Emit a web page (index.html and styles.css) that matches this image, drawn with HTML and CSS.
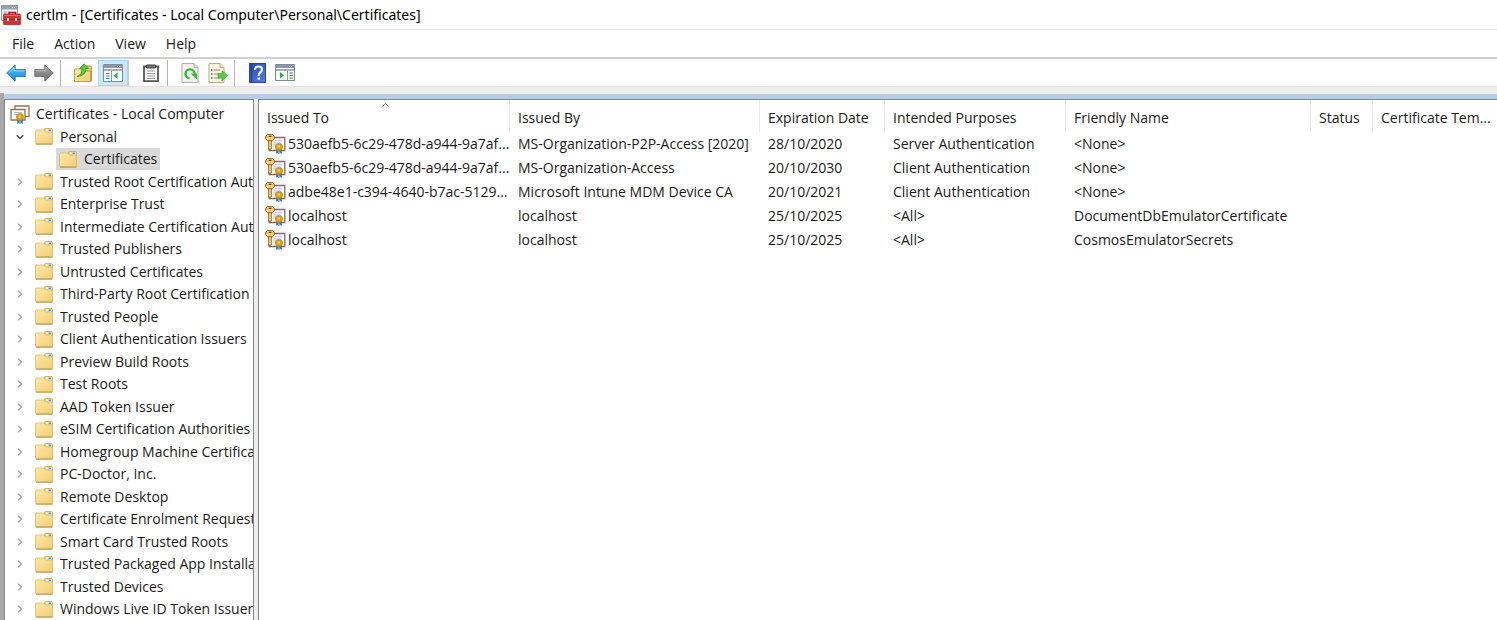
FILE: index.html
```
<!DOCTYPE html>
<html lang="en">
<head>
<meta charset="utf-8">
<title>certlm - [Certificates - Local Computer\Personal\Certificates]</title>
<link rel="stylesheet" href="styles.css">
</head>
<body>
<svg class="sprite" aria-hidden="true">
  <defs>
    <linearGradient id="g-folder" x1="0" y1="0" x2="1" y2="1"><stop offset="0" stop-color="#ffe9a6"/><stop offset="1" stop-color="#f3cd73"/></linearGradient>
    <linearGradient id="g-blue" x1="0" y1="0" x2="0" y2="1"><stop offset="0" stop-color="#5cc6ff"/><stop offset="1" stop-color="#1487dc"/></linearGradient>
    <linearGradient id="g-grey" x1="0" y1="0" x2="0" y2="1"><stop offset="0" stop-color="#a5a5a5"/><stop offset="1" stop-color="#6f6f6f"/></linearGradient>
    <linearGradient id="g-help" x1="0" y1="0" x2="1" y2="1"><stop offset="0" stop-color="#2346b4"/><stop offset="1" stop-color="#5b7fe8"/></linearGradient>
    <symbol id="i-folder" viewBox="0 0 18 17">
      <path d="M9.500 3V1.500q0-1 1-1h5.500q1.500 0 1.500 1.500V15h-8z" fill="#f2cf7e" stroke="#c9a454" stroke-width=".8"/>
      <path d="M11 1.500h5.500v1.900H11z" fill="#eef6fc"/><path d="M13.500 1.500h2.500v1.700h-2.500z" fill="#4f9fe0"/>
      <path d="M.5 3q0-1 1-1H9l1.500 2h6.500q.6 0 .6.600V15q0 1-1 1H1.500q-1 0-1-1z" fill="url(#g-folder)" stroke="#dcb969" stroke-width=".8"/>
      <path d="M1 16.100h16.500" stroke="#b08f4d"/>
    </symbol>
    <symbol id="i-ribbon" viewBox="0 0 8 11">
      <path d="M1.200 5h2.400v6l-1.200-1-1.200 1zM4.400 5h2.400v6l-1.200-1-1.200 1z" fill="#2f73dc"/>
      <circle cx="4" cy="4" r="3.600" fill="#dd9f10" stroke="#b97d08" stroke-width=".6"/><circle cx="3.800" cy="3.600" r="1.300" fill="#f8d75e"/>
    </symbol>
    <symbol id="i-root" viewBox="0 0 20 19">
      <path d="M5 1h14v10.500H5z" fill="#fffdf6" stroke="#8b7654" stroke-width="1.300"/>
      <path d="M1 4.500h14V15H1z" fill="#fff" stroke="#8b7654" stroke-width="1.300"/>
      <path d="M4 7.500h8M3.500 9.500h4" stroke="#a7b2d3" stroke-width=".8"/>
      <use href="#i-ribbon" x="6" y="8" width="8" height="11"/>
    </symbol>
    <symbol id="i-cert" viewBox="0 0 21 20">
      <path d="M4 3.500h15.800v13H4z" fill="#fff" stroke="#806d50" stroke-width="1.300"/>
      <path d="M10 6.800h7M9 9h7.500M8 11h3" stroke="#a6afd8" stroke-width=".9"/>
      <path d="M3.600 6h3v8.500L5 16l-1.400-1.300v-1.500l.8-.7-.8-.9z" fill="#f0b64b" stroke="#8f5c12" stroke-width=".7"/>
      <path d="M2.500.5h5l1.800 1.600v2.600L7.500 6.800h-5L.7 4.800V2.100z" fill="#f6c363" stroke="#8f5c12" stroke-width=".9"/>
      <path d="M3.700 2.400h2.700" stroke="#5f420f" stroke-width="1.200"/><path d="M2 4h5.500" stroke="#fff0bd" stroke-width=".8"/><path d="M5 7.300v6.500" stroke="#ffe7ae" stroke-width=".8"/>
      <use href="#i-ribbon" x="10" y="9" width="8" height="11"/>
    </symbol>
    <symbol id="i-right" viewBox="0 0 8 8"><path d="M2.200.8 5.500 4 2.200 7.200" fill="none" stroke="#a2a2a2" stroke-width="1.300"/></symbol>
    <symbol id="i-down" viewBox="0 0 8 8"><path d="M.8 2.200 4 5.500 7.200 2.200" fill="none" stroke="#404040" stroke-width="1.400"/></symbol>
  </defs>
</svg>

<div class="window">
  <header class="titlebar">
    <svg width="20" height="20" viewBox="0 0 20 20" aria-hidden="true">
      <path d="M.5.500h16v15H.5z" fill="#edf1f4" stroke="#8d99a5"/><path d="M1 1h15v3.500H1z" fill="#94a3b2"/><path d="M11 2.500h1M13 2.500h1" stroke="#fff"/>
      <path d="M2.500 7h3.500M2.500 9h2" stroke="#8b9db0"/>
      <path d="M8 9.500V7.500h6.500v2" fill="none" stroke="#8e2020" stroke-width="1.500"/>
      <path d="M2.500 10q0-1 1-1h15q1 0 1 1v9q0 .7-.7.700H3.200q-.7 0-.7-.7z" fill="#cf3434" stroke="#a32222" stroke-width=".7"/>
      <path d="M3 14.500h16.500" stroke="#98201f"/><path d="M6 13h2v3H6zM14 13h2v3h-2z" fill="#efd9d9"/><path d="M3.500 10.500h15.500" stroke="#e86a62"/>
    </svg>
    <h1 class="title">certlm - [Certificates - Local Computer\Personal\Certificates]</h1>
  </header>

  <nav class="menubar" aria-label="Menu">
    <button>File</button><button>Action</button><button>View</button><button>Help</button>
  </nav>

  <div class="toolbar" role="toolbar" aria-label="Tools">
    <button class="tool" aria-label="Back"><svg width="20" height="18" viewBox="0 0 20 18"><path d="M.7 9 9.200.9v4.600h10v7h-10v4.600z" fill="url(#g-blue)" stroke="#2777b8" stroke-width=".9"/><path d="M3 8.500 8 3.800v3h10" fill="none" stroke="#a5e2ff" stroke-width=".8"/></svg></button>
    <button class="tool" aria-label="Forward"><svg width="20" height="18" viewBox="0 0 20 18"><path d="M19.300 9 10.800.9v4.600H.8v7h10v4.600z" fill="url(#g-grey)" stroke="#707070" stroke-width=".9"/><path d="M2 6.800h10v-3" fill="none" stroke="#c8c8c8" stroke-width=".8"/></svg></button>
    <span class="rule"></span>
    <button class="tool" aria-label="Up one level"><svg width="20" height="20" viewBox="0 0 20 20"><path d="M10 3h7q1.500 0 1.500 1.500V18H10z" fill="#ecc36a" stroke="#bf9547"/><path d="M1.500 6h7l2 2h7v10.500h-16z" fill="url(#g-folder)" stroke="#c79d4b"/><path d="M4 13.500Q9 12 9 5.500H6.500L11 .8l4.800 4.700H13Q13 13 4 13.500z" fill="#4fce3a" stroke="#2e9c22" stroke-width=".8"/></svg></button>
    <button class="tool pressed" aria-label="Show or hide console tree" aria-pressed="true"><svg width="20" height="18" viewBox="0 0 20 18"><path d="M.5.500h19v17H.5z" fill="#f5f8fa" stroke="#808b98"/><path d="M1 1h18v3H1z" fill="#8c98a7"/><path d="M14 2.500h1M16 2.500h1" stroke="#fff"/><path d="M1 6h18" stroke="#a4afbb" stroke-width="2"/><path d="M8.500 7v10" stroke="#8b99a9"/><path d="M3 9.500h3.500M3 12h3.500M3 14.500h3.500" stroke="#3f78be" stroke-width="1.200"/><path d="M14.500 8.500v6.500l-4-3.200z" fill="#2fae33"/></svg></button>
    <span class="rule edge"></span>
    <button class="tool" aria-label="Properties"><svg width="16" height="18" viewBox="0 0 16 18"><path d="M1 2.500h14v14.700H1z" fill="#fafafa" stroke="#555" stroke-width="1.800"/><path d="M3.500 1h9v3h-9z" fill="#777" stroke="#444"/><path d="M4 7h8M4 9.500h8M4 12h8M4 14.500h8" stroke="#999"/></svg></button>
    <span class="rule"></span>
    <button class="tool" aria-label="Refresh"><svg width="18" height="20" viewBox="0 0 18 20"><path d="M1 .6h12l4 4v14.800H1z" fill="#f5f5f4" stroke="#a8a8a8"/><path d="M13 .6v4h4" fill="#ddd" stroke="#b0b0b0"/><path d="M8.500 15.300a4.500 4.500 0 1 1 5-4.500" fill="none" stroke="#39b83a" stroke-width="2.400"/><path d="M9.500 10.500h6.500v6z" fill="#39b83a"/></svg></button>
    <button class="tool" aria-label="Export list"><svg width="20" height="20" viewBox="0 0 20 20"><path d="M1 .6h11l4 4v14.800H1z" fill="#fcf5dc" stroke="#b1a98e"/><path d="M12 .6v4h4" fill="#eee0b8" stroke="#b1a98e"/><path d="M3 7h1.500M3 11h1.500M3 15h1.500" stroke="#555" stroke-width="1.300"/><path d="M6 7h6M6 11h5M6 15h6" stroke="#8c8490"/><path d="M10 10.700h4V7.800l5.500 5-5.500 5V15h-4z" fill="#58cb45" stroke="#35a429" stroke-width=".7"/></svg></button>
    <span class="rule"></span>
    <button class="tool" aria-label="Help"><svg width="17" height="20" viewBox="0 0 17 20"><path d="M.5.500h16v19H.5z" fill="url(#g-help)" stroke="#2945a0"/><path d="M2.500 1v18" stroke="#1d3a9a"/><path d="M6 6.700q0-3.200 3.500-3.200t3.500 3q0 1.700-1.800 2.900Q9.700 10.500 9.700 12.700" fill="none" stroke="#fff" stroke-width="2"/><path d="M8.600 14.500h2.300v2.200H8.600z" fill="#fff"/></svg></button>
    <button class="tool" aria-label="Show or hide action pane"><svg width="20" height="17" viewBox="0 0 20 17"><path d="M.5.500h19v16H.5z" fill="#f5f7f9" stroke="#808b98"/><path d="M1 1h18v3H1z" fill="#8c98a7"/><path d="M14 2.500h1M16 2.500h1" stroke="#fff"/><path d="M1 6h18" stroke="#a4afbb" stroke-width="2"/><path d="M12.500 7v9" stroke="#8b99a9"/><path d="M14.500 9h3.500M14.500 11.500h3.500M14.500 14h3.500" stroke="#3f78be" stroke-width="1.200"/><path d="M5 8v6.500l4-3.200z" fill="#2fae33"/></svg></button>
  </div>

  <main class="console">
    <ul class="tree" role="tree" aria-label="Console tree">
      <li class="root" role="treeitem" aria-level="1"><svg class="cert-root"><use href="#i-root"/></svg><span>Certificates - Local Computer</span></li>
      <li role="treeitem" aria-level="2"><button class="toggle" aria-label="Collapse"><svg><use href="#i-down"/></svg></button><svg class="folder"><use href="#i-folder"/></svg><span>Personal</span></li>
      <li class="leaf" role="treeitem" aria-level="3" aria-selected="true"><span class="selected"><svg class="folder"><use href="#i-folder"/></svg><span>Certificates</span></span></li>
      <li role="treeitem" aria-level="2"><button class="toggle" aria-label="Expand"><svg><use href="#i-right"/></svg></button><svg class="folder"><use href="#i-folder"/></svg><span>Trusted Root Certification Aut</span></li>
      <li role="treeitem" aria-level="2"><button class="toggle" aria-label="Expand"><svg><use href="#i-right"/></svg></button><svg class="folder"><use href="#i-folder"/></svg><span>Enterprise Trust</span></li>
      <li role="treeitem" aria-level="2"><button class="toggle" aria-label="Expand"><svg><use href="#i-right"/></svg></button><svg class="folder"><use href="#i-folder"/></svg><span>Intermediate Certification Aut</span></li>
      <li role="treeitem" aria-level="2"><button class="toggle" aria-label="Expand"><svg><use href="#i-right"/></svg></button><svg class="folder"><use href="#i-folder"/></svg><span>Trusted Publishers</span></li>
      <li role="treeitem" aria-level="2"><button class="toggle" aria-label="Expand"><svg><use href="#i-right"/></svg></button><svg class="folder"><use href="#i-folder"/></svg><span>Untrusted Certificates</span></li>
      <li role="treeitem" aria-level="2"><button class="toggle" aria-label="Expand"><svg><use href="#i-right"/></svg></button><svg class="folder"><use href="#i-folder"/></svg><span>Third-Party Root Certification</span></li>
      <li role="treeitem" aria-level="2"><button class="toggle" aria-label="Expand"><svg><use href="#i-right"/></svg></button><svg class="folder"><use href="#i-folder"/></svg><span>Trusted People</span></li>
      <li role="treeitem" aria-level="2"><button class="toggle" aria-label="Expand"><svg><use href="#i-right"/></svg></button><svg class="folder"><use href="#i-folder"/></svg><span>Client Authentication Issuers</span></li>
      <li role="treeitem" aria-level="2"><button class="toggle" aria-label="Expand"><svg><use href="#i-right"/></svg></button><svg class="folder"><use href="#i-folder"/></svg><span>Preview Build Roots</span></li>
      <li role="treeitem" aria-level="2"><button class="toggle" aria-label="Expand"><svg><use href="#i-right"/></svg></button><svg class="folder"><use href="#i-folder"/></svg><span>Test Roots</span></li>
      <li role="treeitem" aria-level="2"><button class="toggle" aria-label="Expand"><svg><use href="#i-right"/></svg></button><svg class="folder"><use href="#i-folder"/></svg><span>AAD Token Issuer</span></li>
      <li role="treeitem" aria-level="2"><button class="toggle" aria-label="Expand"><svg><use href="#i-right"/></svg></button><svg class="folder"><use href="#i-folder"/></svg><span>eSIM Certification Authorities</span></li>
      <li role="treeitem" aria-level="2"><button class="toggle" aria-label="Expand"><svg><use href="#i-right"/></svg></button><svg class="folder"><use href="#i-folder"/></svg><span>Homegroup Machine Certifica</span></li>
      <li role="treeitem" aria-level="2"><button class="toggle" aria-label="Expand"><svg><use href="#i-right"/></svg></button><svg class="folder"><use href="#i-folder"/></svg><span>PC-Doctor, Inc.</span></li>
      <li role="treeitem" aria-level="2"><button class="toggle" aria-label="Expand"><svg><use href="#i-right"/></svg></button><svg class="folder"><use href="#i-folder"/></svg><span>Remote Desktop</span></li>
      <li role="treeitem" aria-level="2"><button class="toggle" aria-label="Expand"><svg><use href="#i-right"/></svg></button><svg class="folder"><use href="#i-folder"/></svg><span>Certificate Enrolment Request</span></li>
      <li role="treeitem" aria-level="2"><button class="toggle" aria-label="Expand"><svg><use href="#i-right"/></svg></button><svg class="folder"><use href="#i-folder"/></svg><span>Smart Card Trusted Roots</span></li>
      <li role="treeitem" aria-level="2"><button class="toggle" aria-label="Expand"><svg><use href="#i-right"/></svg></button><svg class="folder"><use href="#i-folder"/></svg><span>Trusted Packaged App Installa</span></li>
      <li role="treeitem" aria-level="2"><button class="toggle" aria-label="Expand"><svg><use href="#i-right"/></svg></button><svg class="folder"><use href="#i-folder"/></svg><span>Trusted Devices</span></li>
      <li role="treeitem" aria-level="2"><button class="toggle" aria-label="Expand"><svg><use href="#i-right"/></svg></button><svg class="folder"><use href="#i-folder"/></svg><span>Windows Live ID Token Issuer</span></li>
    </ul>

    <section class="list" aria-label="Certificates">
      <table>
        <colgroup><col class="c-to"><col class="c-by"><col class="c-date"><col class="c-purpose"><col class="c-name"><col class="c-status"><col></colgroup>
        <thead>
          <tr>
            <th scope="col" aria-sort="ascending">Issued To<svg class="sort" viewBox="0 0 7 4" aria-hidden="true"><path d="M.5 3.500 3.500.7l3 2.800" fill="none" stroke="#888"/></svg></th>
            <th scope="col">Issued By</th><th scope="col">Expiration Date</th><th scope="col">Intended Purposes</th><th scope="col">Friendly Name</th><th scope="col">Status</th><th scope="col">Certificate Tem...</th>
          </tr>
        </thead>
        <tbody>
          <tr><td><div class="name"><svg><use href="#i-cert"/></svg><span>530aefb5-6c29-478d-a944-9a7af...</span></div></td><td>MS-Organization-P2P-Access [2020]</td><td>28/10/2020</td><td>Server Authentication</td><td>&lt;None&gt;</td><td></td><td></td></tr>
          <tr><td><div class="name"><svg><use href="#i-cert"/></svg><span>530aefb5-6c29-478d-a944-9a7af...</span></div></td><td>MS-Organization-Access</td><td>20/10/2030</td><td>Client Authentication</td><td>&lt;None&gt;</td><td></td><td></td></tr>
          <tr><td><div class="name"><svg><use href="#i-cert"/></svg><span>adbe48e1-c394-4640-b7ac-5129...</span></div></td><td>Microsoft Intune MDM Device CA</td><td>20/10/2021</td><td>Client Authentication</td><td>&lt;None&gt;</td><td></td><td></td></tr>
          <tr><td><div class="name"><svg><use href="#i-cert"/></svg><span>localhost</span></div></td><td>localhost</td><td>25/10/2025</td><td>&lt;All&gt;</td><td>DocumentDbEmulatorCertificate</td><td></td><td></td></tr>
          <tr><td><div class="name"><svg><use href="#i-cert"/></svg><span>localhost</span></div></td><td>localhost</td><td>25/10/2025</td><td>&lt;All&gt;</td><td>CosmosEmulatorSecrets</td><td></td><td></td></tr>
        </tbody>
      </table>
    </section>
  </main>
</div>
</body>
</html>
```

FILE: styles.css
```
* { box-sizing: border-box; }

body {
  margin: 0;
  background: #fff;
  color: #1a1a1a;
  font-family: "Open Sans", "Noto Sans", sans-serif;
  font-size: 14px;
  line-height: 20px;
}

button {
  border: 0;
  padding: 0;
  background: none;
  color: inherit;
  font: inherit;
}

svg { flex: none; display: block; }

.sprite { position: absolute; width: 0; height: 0; }

.window {
  display: flex;
  flex-direction: column;
  height: 100vh;
  overflow: hidden;
}

.titlebar {
  display: flex;
  align-items: center;
  gap: 5px;
  height: 30px;
  padding-left: 1px;
  border-bottom: 1px solid #ececec;
}

.title {
  margin: 0;
  color: #000;
  font-family: "Noto Sans", "Open Sans", sans-serif;
  font-size: 14px;
  font-weight: 400;
}

.menubar {
  display: flex;
  align-items: center;
  gap: 20px;
  height: 27px;
  padding-left: 12px;
}

.toolbar {
  display: flex;
  align-items: center;
  height: 30px;
  padding-left: 2px;
  border-top: 2px solid #cfcfcf;
  border-bottom: 1px solid #e3e3e3;
}

.tool {
  display: flex;
  align-items: center;
  justify-content: center;
  width: 28px;
  height: 26px;
}

.pressed {
  width: 30px;
  margin-left: 1px;
  background: #cce8ff;
  border: 1px solid #a8d4f5;
}

.rule {
  width: 1px;
  height: 26px;
  margin: 0 8px 0 2px;
  background: #b5b5b5;
}

.edge { margin-left: 0; background: #d0d0d0; }

.console {
  flex: 1;
  min-height: 0;
  display: grid;
  grid-template-columns: 250px minmax(0, 1fr);
  column-gap: 4px;
  padding-top: 12px;
  border-left: 4px solid #a8a8a8;
  border-image: linear-gradient(#eee 7px, #a8a8a8 7px) 1;
  border-image-width: 0 0 0 4px;
  background: linear-gradient(#eee 7px, #b5cde8 7px, #b5cde8 12px, #eee 12px);
}

.tree, .list {
  min-height: 0;
  overflow: hidden;
  background: #fff;
  border: 1px solid #828790;
  border-bottom: 0;
}

.tree {
  margin: 0;
  padding: 3px 0 0;
  list-style: none;
  white-space: nowrap;
}

.tree li {
  display: flex;
  align-items: center;
  height: 23px;
  padding-left: 7px;
}

.tree li:nth-child(odd) { height: 22px; }

.tree .root { padding-left: 5px; gap: 6px; }
.tree .leaf { padding-left: 51px; }

.cert-root { width: 20px; height: 19px; }
.folder { width: 18px; height: 17px; margin-right: 7px; }

.toggle {
  display: flex;
  align-items: center;
  justify-content: center;
  flex: none;
  width: 16px;
  height: 16px;
  margin-right: 7px;
}

.toggle svg { width: 8px; height: 8px; }

.selected {
  display: flex;
  align-items: center;
  height: 22px;
  padding: 0 3px;
  background: #d9d9d9;
}

.list { border-right: 0; }

table {
  width: 100%;
  table-layout: fixed;
  border-collapse: separate;
  border-spacing: 0;
}

.c-to { width: 251px; }
.c-by { width: 250px; }
.c-date { width: 125px; }
.c-purpose { width: 181px; }
.c-name { width: 245px; }
.c-status { width: 62px; }

th, td {
  padding: 0 0 0 8px;
  text-align: left;
  font-weight: 400;
  white-space: nowrap;
}

th {
  position: relative;
  height: 32px;
  padding-top: 4px;
  border-right: 1px solid #e8e8e8;
}

th:last-child { border-right: 0; }

td { height: 24px; }

.sort {
  position: absolute;
  top: 3px;
  left: 49%;
  width: 7px;
  height: 4px;
}

td:first-child { padding-left: 6px; }

.name { display: flex; align-items: center; gap: 2px; }
.name svg { width: 21px; height: 20px; }
```
